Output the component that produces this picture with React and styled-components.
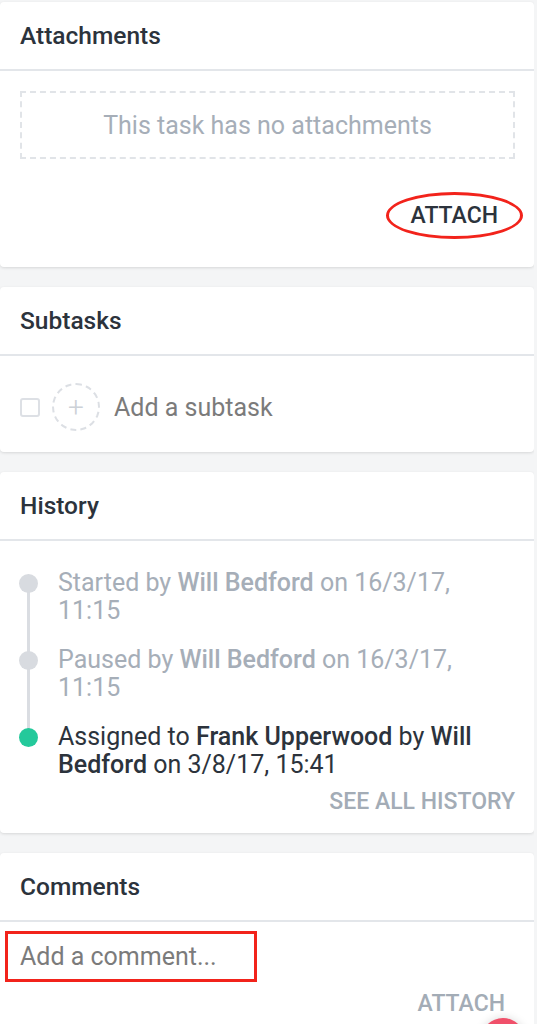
import React from 'react'
import styled, { createGlobalStyle } from 'styled-components'

const Global = createGlobalStyle`
  body {
    margin: 0;
    background: #f4f5f6;
    font-family: Roboto, "Noto Sans", sans-serif;
    color: #2c333c;
  }
`

const history = [
  { verb: 'Started by', who: 'Will Bedford', rest: ' on 16/3/17, 11:15', done: true },
  { verb: 'Paused by', who: 'Will Bedford', rest: ' on 16/3/17, 11:15', done: true },
  { verb: 'Assigned to', who: 'Frank Upperwood', by: 'Will Bedford', rest: ' on 3/8/17, 15:41', done: false },
]

function App() {
  return (
    <Page>
      <Global />
      <Card>
        <CardHeader>Attachments</CardHeader>
        <CardBody>
          <EmptyBox>This task has no attachments</EmptyBox>
          <Actions>
            <TextButton circled>ATTACH</TextButton>
          </Actions>
        </CardBody>
      </Card>

      <Card>
        <CardHeader>Subtasks</CardHeader>
        <SubtaskRow>
          <Checkbox />
          <AddCircle>+</AddCircle>
          <Placeholder>Add a subtask</Placeholder>
        </SubtaskRow>
      </Card>

      <Card>
        <CardHeader>History</CardHeader>
        <Timeline>
          {history.map((h, i) => (
            <Event key={i} last={i === history.length - 1}>
              <Dot done={h.done} />
              <EventText done={h.done}>
                {h.verb} <b>{h.who}</b>
                {h.by ? <> by <b>{h.by}</b></> : null}
                {h.rest}
              </EventText>
            </Event>
          ))}
          <Actions>
            <TextButton muted>SEE ALL HISTORY</TextButton>
          </Actions>
        </Timeline>
      </Card>

      <Card>
        <CardHeader>Comments</CardHeader>
        <CommentBody>
          <CommentInput>Add a comment...</CommentInput>
          <Actions>
            <TextButton muted>ATTACH</TextButton>
          </Actions>
          <Fab />
        </CommentBody>
      </Card>
    </Page>
  )
}

export default App

const Page = styled.div`
  width: 534px;
  padding-top: 2px;
  display: flex;
  flex-direction: column;
  gap: 20px;
  height: 1022px;
  overflow: hidden;
`

const Card = styled.section`
  background: #fff;
  border-radius: 4px;
  box-shadow: 0 1px 3px rgba(0, 0, 0, 0.12);
  flex-shrink: 0;
  position: relative;
`

const CardHeader = styled.h2`
  margin: 0;
  height: 67px;
  padding: 0 20px;
  display: flex;
  align-items: center;
  font-size: 24.5px;
  font-weight: 500;
  color: #2c333c;
  border-bottom: 2px solid #e3e6ea;
`

const CardBody = styled.div`
  padding: 20px 11px 28px 20px;
`

const EmptyBox = styled.div`
  height: 64px;
  margin-right: 8px;
  border: 2px dashed #e1e4e8;
  display: flex;
  align-items: center;
  justify-content: center;
  font-size: 25px;
  color: #a6aeb8;
`

const Actions = styled.div`
  display: flex;
  justify-content: flex-end;
`

const TextButton = styled.button`
  font-family: Roboto, sans-serif;
  font-size: 23px;
  line-height: 27px;
  font-weight: 500;
  background: none;
  cursor: pointer;
  color: ${p => (p.muted ? '#a3acb6' : '#2c333c')};
  border: ${p => (p.circled ? '3px solid #f2231b' : 'none')};
  border-radius: 50%;
  padding: ${p => (p.circled ? '7px 22px' : '0')};
  margin-top: ${p => (p.circled ? '33px' : '0')};
`

const SubtaskRow = styled.div`
  height: 90px;
  padding: 6px 0 0 20px;
  display: flex;
  align-items: center;
`

const Checkbox = styled.span`
  width: 16px;
  height: 15px;
  border: 2px solid #dde0e5;
  border-radius: 3px;
`

const AddCircle = styled.span`
  width: 44px;
  height: 44px;
  margin-left: 12px;
  border: 2px dashed #dcdfe4;
  border-radius: 50%;
  display: flex;
  align-items: center;
  justify-content: center;
  color: #ccd1d7;
  font-size: 28px;
  font-weight: 300;
`

const Placeholder = styled.span`
  margin-left: 14px;
  font-size: 25px;
  color: #7b7b7b;
`

const Timeline = styled.div`
  padding: 28px 19px 18px 19px;
`

const Event = styled.div`
  position: relative;
  display: flex;
  align-items: flex-start;
  padding-bottom: ${p => (p.last ? '9px' : '21px')};
  &::before {
    content: '';
    display: ${p => (p.last ? 'none' : 'block')};
    position: absolute;
    left: 8px;
    top: 14px;
    bottom: -14px;
    width: 3px;
    background: #dadde2;
  }
`

const Dot = styled.span`
  position: relative;
  z-index: 1;
  width: 19px;
  height: 19px;
  margin-top: 4.5px;
  border-radius: 50%;
  flex-shrink: 0;
  background: ${p => (p.done ? '#d8dbe0' : '#24c99b')};
`

const EventText = styled.p`
  margin: 0 0 0 20px;
  font-size: 25px;
  line-height: 28px;
  color: ${p => (p.done ? '#a6aeb8' : '#2c333c')};
  b {
    font-weight: 500;
  }
`

const CommentBody = styled.div`
  padding: 9px 29px 0 5px;
  height: 140px;
  position: relative;
`

const CommentInput = styled.div`
  width: 234px;
  height: 45px;
  border: 3px solid #f2231b;
  padding-left: 12px;
  display: flex;
  align-items: center;
  font-size: 25px;
  color: #7b7b7b;
  margin-bottom: 8px;
`

const Fab = styled.span`
  position: absolute;
  left: 481px;
  top: 96px;
  width: 44px;
  height: 44px;
  border-radius: 50%;
  background: #f0506a;
  box-shadow: 0 0 10px rgba(0, 0, 0, 0.15);
`
